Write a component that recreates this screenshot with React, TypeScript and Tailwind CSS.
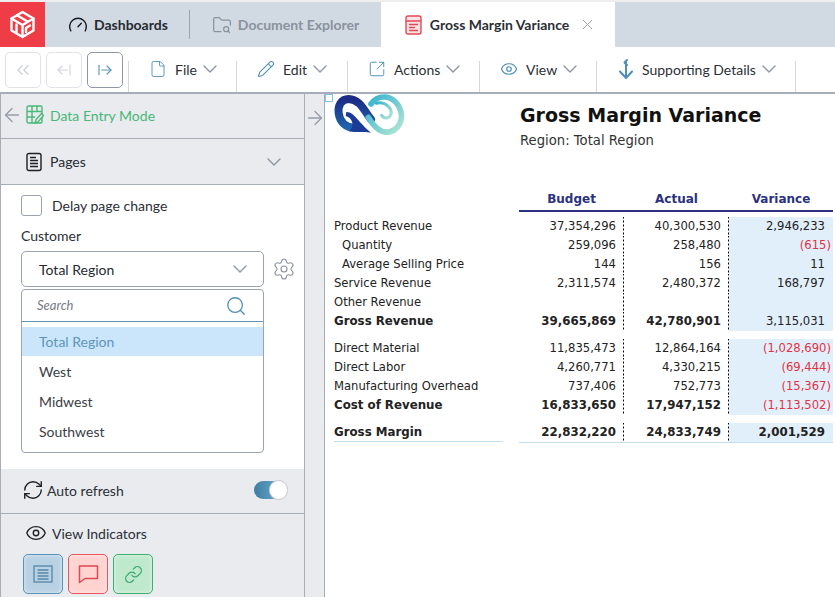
import React from "react";
import { ArrowLeft, ArrowLeftFromLine, ArrowRight, ArrowRightFromLine, ChevronDown, ChevronsLeft, Eye, File, FolderSearch, Gauge, Link, Pencil, RefreshCw, Search, Settings, SquareArrowOutUpRight, X } from "lucide-react";

const BLUE = "#4f8fb5";

function ToolItem({ icon, label, w }: { icon: React.ReactNode; label: string; w: string }) {
  return (
    <div className={`flex h-[31px] items-center border-r border-[#d3d7dd] pb-[15px] pl-[20px] ${w}`}>
      <span className="flex w-[18px] shrink-0 justify-center">{icon}</span>
      <span className="ml-[8px] text-[14px] text-[#2b2f36]">{label}</span>
      <ChevronDown size={24} strokeWidth={1.4} className="ml-[1px] shrink-0 text-[#8d96a3]" />
    </div>
  );
}

function NavBtn({ children, active }: { children: React.ReactNode; active?: boolean }) {
  return (
    <div className={`flex h-[36px] w-[36px] items-center justify-center rounded-[5px] border ${active ? "border-[#8f98a4] text-[#5e95b8]" : "border-[#dfe2e6] text-[#cfd3d9]"}`}>
      {children}
    </div>
  );
}

type Row = { l: string; b: string; a: string; v: string; bold?: boolean; indent?: boolean; neg?: boolean; vbold?: boolean };

const g1: Row[] = [
  { l: "Product Revenue", b: "37,354,296", a: "40,300,530", v: "2,946,233" },
  { l: "Quantity", b: "259,096", a: "258,480", v: "(615)", indent: true, neg: true },
  { l: "Average Selling Price", b: "144", a: "156", v: "11", indent: true },
  { l: "Service Revenue", b: "2,311,574", a: "2,480,372", v: "168,797" },
  { l: "Other Revenue", b: "", a: "", v: "" },
  { l: "Gross Revenue", b: "39,665,869", a: "42,780,901", v: "3,115,031", bold: true },
];
const g2: Row[] = [
  { l: "Direct Material", b: "11,835,473", a: "12,864,164", v: "(1,028,690)", neg: true },
  { l: "Direct Labor", b: "4,260,771", a: "4,330,215", v: "(69,444)", neg: true },
  { l: "Manufacturing Overhead", b: "737,406", a: "752,773", v: "(15,367)", neg: true },
  { l: "Cost of Revenue", b: "16,833,650", a: "17,947,152", v: "(1,113,502)", bold: true, neg: true },
];
const g3: Row[] = [{ l: "Gross Margin", b: "22,832,220", a: "24,833,749", v: "2,001,529", bold: true, vbold: true }];

const dots = "bg-[linear-gradient(#000_2px,transparent_2px)] bg-[length:1px_4px] bg-right bg-repeat-y";

function TableRow({ r, last }: { r: Row; last?: boolean }) {
  const w = r.bold ? "font-bold text-[11.8px]" : "font-normal text-[11.6px]";
  return (
    <div className="grid h-[19px] grid-cols-[185px_105px_105px_104px] items-stretch leading-[19px] text-[#222]">
      <div className={`${w} ${r.indent ? "pl-[8px]" : ""}`}>
        <div className={`mr-[16px] h-[19px] whitespace-nowrap ${last ? "border-b border-[#c5dff0]" : ""}`}>{r.l}</div>
      </div>
      <div className={`${dots} pr-[8px] text-right ${w}`}>{r.b}</div>
      <div className={`${dots} pr-[8px] text-right ${w}`}>{r.a}</div>
      <div className={`bg-[#e1effb] text-right ${r.vbold ? "font-bold text-[11.8px]" : "text-[11.6px]"} ${r.neg ? "pr-[2px] text-[#e5303f]" : "pr-[8px]"}`}>{r.v}</div>
    </div>
  );
}

export default function App() {
  return (
    <div className="flex h-[597px] w-[835px] flex-col overflow-hidden bg-white font-['Lato','Noto_Sans',sans-serif]">
      <div className="h-[2px] bg-[#eeeeee]" />
      {/* tabs */}
      <div className="flex h-[45px] bg-[#d1d9e3]">
        <div className="flex w-[45px] items-center justify-center bg-[#ef3d47]">
          <svg width="27" height="29" viewBox="0 0 27 29" fill="none" stroke="white" strokeWidth="2.4" strokeLinejoin="round" strokeLinecap="round">
            <path d="M13.500 2 24.500 8.500V20.500L13.500 27 2.500 20.500V8.500Z" />
            <path d="M2.500 8.500 13.500 15V27" />
            <path d="M13.500 15 24.500 8.500" />
            <path d="M8 5.200 18.500 11.500" />
            <path d="M7.500 14.500V22" />
            <path d="M21 15.500 17 18v4" />
          </svg>
        </div>
        <div className="flex items-center pl-[23px]">
          <Gauge size={20} strokeWidth={1.7} className="text-[#15181d]" />
          <span className="ml-[6px] text-[14px] font-bold text-[#262a31]">Dashboards</span>
        </div>
        <div className="my-[8px] ml-[21px] w-px bg-[#9aa3ae]" />
        <div className="flex w-[191px] items-center pl-[22px] text-[#8a929d]">
          <FolderSearch size={20} strokeWidth={1.5} />
          <span className="ml-[6px] text-[14px] font-bold">Document Explorer</span>
        </div>
        <div className="flex w-[234px] items-center bg-white pl-[24px]">
          <svg width="17" height="20" viewBox="0 0 17 20" fill="none" stroke="#e04a55" strokeWidth="1.4">
            <rect x="1" y="1" width="15" height="18" rx="2" fill="#fbe3e5" />
            <path d="M1 6h15M4 9.500h9M4 12.500h6M4 15.500h9" />
          </svg>
          <span className="ml-[8px] text-[14px] font-bold text-[#2b2f36]">Gross Margin Variance</span>
          <X size={17} strokeWidth={1.4} className="ml-[10px] text-[#9aa1ab]" />
        </div>
        <div className="flex-1" />
      </div>
      {/* toolbar */}
      <div className="flex h-[45px] items-center">
        <div className="flex h-[36px] items-center gap-[5px] pl-[5px] pr-[5px]">
          <NavBtn><ChevronsLeft size={20} strokeWidth={1.7} /></NavBtn>
          <NavBtn><ArrowLeftFromLine size={16} strokeWidth={1.7} /></NavBtn>
          <NavBtn active><ArrowRightFromLine size={16} strokeWidth={1.7} /></NavBtn>
        </div>
        <div className="flex items-center self-end border-l border-[#d3d7dd]">
          <ToolItem w="w-[108px] pl-[18px]" label="File" icon={<File size={24} strokeWidth={1.2} color={BLUE} />} />
          <ToolItem w="w-[111px]" label="Edit" icon={<Pencil size={20} strokeWidth={1.4} color={BLUE} />} />
          <ToolItem w="w-[132px]" label="Actions" icon={<SquareArrowOutUpRight size={24} strokeWidth={1.3} color={BLUE} />} />
          <ToolItem w="w-[117px]" label="View" icon={<Eye size={22} strokeWidth={1.6} color={BLUE} />} />
          <div className="flex h-[31px] w-[199px] items-center border-r border-[#d3d7dd] pb-[15px] pl-[20px]">
            <svg width="18" height="22" viewBox="0 0 18 22" fill="none" stroke={BLUE} strokeWidth="2" strokeLinecap="round" strokeLinejoin="round">
              <path d="M10 2 7.500 4.500 10 7" />
              <path d="M9 4.500V19" />
              <path d="M3 13.500 9 20l6-6.500" />
            </svg>
            <span className="ml-[7px] text-[14px] text-[#2b2f36]">Supporting Details</span>
            <ChevronDown size={24} strokeWidth={1.4} className="ml-[1px] shrink-0 text-[#8d96a3]" />
          </div>
        </div>
      </div>
      <div className="h-[2px] bg-[#a7aeb9]" />
      <div className="flex min-h-0 flex-1">
        {/* sidebar */}
        <div className="flex w-[305px] flex-col border-x border-[#a7aeb9] bg-[#e9ebef]">
          <div className="flex h-[45px] items-center border-b border-[#a7aeb9] pb-[2px] pl-[0px]">
            <ArrowLeft size={22} strokeWidth={1.5} className="shrink-0 text-[#969ea9]" />
            <svg width="18" height="20" viewBox="0 0 18 20" fill="none" stroke="#49b878" strokeWidth="1.4" className="ml-[3px]">
              <rect x="1" y="1" width="15" height="17" rx="1.500" />
              <path d="M1 6.500h15M1 12h8M6 1v17M11 1v6" />
              <path d="M9 18l1-3.500L15.500 8.500l2 2L12 17z" fill="#e9ebef" />
            </svg>
            <span className="ml-[6px] text-[14px] text-[#47b877]">Data Entry Mode</span>
          </div>
          <div className="flex h-[46px] items-center border-b border-[#a7aeb9] pl-[25px]">
            <svg width="16" height="20" viewBox="0 0 16 20" fill="none" stroke="#1c1f24" strokeWidth="1.4">
              <rect x="1" y="1.500" width="14" height="17" rx="2" />
              <path d="M4 5.500h6M4 8.500h8M4 11.500h8M4 14.500h8" />
            </svg>
            <span className="ml-[8px] text-[14px] text-[#262a31]">Pages</span>
            <ChevronDown size={24} strokeWidth={1.4} className="ml-[176px] shrink-0 text-[#8d96a3]" />
          </div>
          <div className="flex h-[284px] flex-col bg-white pl-[20px]">
            <div className="mt-[10px] flex h-[21px] items-center">
              <div className="h-[21px] w-[21px] rounded-[3px] border border-[#9aa3ae]" />
              <span className="ml-[10px] text-[14px] text-[#2b2f36]">Delay page change</span>
            </div>
            <div className="mt-[10px] h-[20px] text-[14px] leading-[20px] text-[#2b2f36]">Customer</div>
            <div className="mt-[5px] flex items-center">
              <div className="flex h-[36px] w-[243px] items-center justify-between rounded-[5px] border border-[#9aa3ae] pl-[17px] pr-[11px]">
                <span className="text-[14px] text-[#262a31]">Total Region</span>
                <ChevronDown size={24} strokeWidth={1.4} className="shrink-0 text-[#8d96a3]" />
              </div>
              <Settings size={24} strokeWidth={1.1} className="ml-[8px] text-[#8a929d]" />
            </div>
            <div className="mt-[2px] h-[164px] w-[243px] rounded-[4px] border border-[#9aa3ae]">
              <div className="flex h-[32px] items-center justify-between border-b border-[#5e95b8] pl-[15px] pr-[16px]">
                <span className="text-[13px] italic text-[#757c86]">Search</span>
                <Search size={22} strokeWidth={1.4} color={BLUE} />
              </div>
              <div className="mt-[5px] flex h-[29px] items-center bg-[#cbe5fb] pl-[17px] text-[14px] text-[#5e95b8]">Total Region</div>
              {["West", "Midwest", "Southwest"].map((t) => (
                <div key={t} className="flex h-[30px] items-center pl-[17px] text-[14px] text-[#3a3e45]">{t}</div>
              ))}
            </div>
          </div>
          <div className="flex h-[45px] items-center border-b border-[#a7aeb9] pb-[2px] pl-[21px]">
            <RefreshCw size={22} strokeWidth={1.5} className="shrink-0 text-[#1c1f24]" />
            <span className="ml-[3px] text-[14px] text-[#2b2f36]">Auto refresh</span>
            <div className="relative ml-[130px] h-[18px] w-[33px] rounded-full bg-linear-to-r from-[#3f7ea3] to-[#74b4d8]">
              <div className="absolute right-[-1px] top-[-1px] h-[20px] w-[19px] rounded-full border border-[#c4c9d0] bg-white" />
            </div>
          </div>
          <div className="flex flex-1 flex-col pl-[22px]">
            <div className="mt-[9px] flex h-[20px] items-center pl-[2px]">
              <Eye size={22} strokeWidth={1.5} className="shrink-0 text-[#1c1f24]" />
              <span className="ml-[5px] text-[14px] text-[#2b2f36]">View Indicators</span>
            </div>
            <div className="mt-[11px] flex gap-[5px]">
              <div className="flex h-[40px] w-[40px] items-center justify-center rounded-[5px] border border-[#5b93b8] bg-[#b8d2e4] shadow-[inset_0_0_4px_rgba(255,255,255,0.6)]">
                <svg width="20" height="18" viewBox="0 0 20 18" fill="none" stroke="#5585a6" strokeWidth="1.300">
                  <rect x="1" y="1" width="18" height="16" />
                  <path d="M4.500 5h11M4.500 8h11M4.500 11h11M4.500 14h11" />
                </svg>
              </div>
              <div className="flex h-[40px] w-[40px] items-center justify-center rounded-[5px] border border-[#e8555e] bg-[#ffd3d0] shadow-[inset_0_0_4px_rgba(255,255,255,0.6)]">
                <svg width="21" height="20" viewBox="0 0 21 20" fill="none" stroke="#dc4a55" strokeWidth="1.5" strokeLinejoin="round">
                  <path d="M1.500 2h18v12.500H7L1.500 18.500z" />
                </svg>
              </div>
              <div className="flex h-[40px] w-[40px] items-center justify-center rounded-[5px] border border-[#3fae6e] bg-[#bfe9cd] shadow-[inset_0_0_4px_rgba(255,255,255,0.6)]">
                <Link size={19} strokeWidth={1.6} color="#3fa86d" />
              </div>
            </div>
          </div>
        </div>
        {/* gutter */}
        <div className="flex w-[20px] justify-center border-r border-[#a7aeb9] bg-[#e9ebef] pt-[13px]">
          <ArrowRight size={22} strokeWidth={1.5} className="shrink-0 text-[#969ea9]" />
        </div>
        {/* report */}
        <div className="relative flex-1 pl-[9px] font-['DejaVu_Sans',sans-serif]">
          <div className="absolute left-0 top-0 h-[8px] w-[8px] border border-[#7fc0e8] bg-white" />
          <div className="relative flex h-[94px]">
            <svg width="80" height="46" viewBox="0 0 240 138" className="absolute left-[-7px] top-[-2px]" fill="none">
              <defs>
                <linearGradient id="a" x1="0" y1="0" x2="0" y2="1">
                  <stop offset="0" stopColor="#1c2b86" />
                  <stop offset="1" stopColor="#1f63ad" />
                </linearGradient>
                <linearGradient id="b" x1="0" y1="0" x2="1" y2="1">
                  <stop offset="0" stopColor="#35b2cf" />
                  <stop offset="1" stopColor="#b4e6d4" />
                </linearGradient>
              </defs>
              <path d="M132 82C112 58 100 22 65 21C42 21 32 42 35 64C38 88 54 106 82 108" stroke="url(#a)" strokeWidth="24" strokeLinecap="round" />
              <path d="M58 60C80 58 95 92 132 122C108 118 88 122 66 118C84 104 78 78 56 72Z" fill="#1c3b98" />
              <path d="M124 76C142 106 164 124 186 120C214 114 228 86 222 60C214 30 192 14 170 15C156 15 142 22 132 36" stroke="url(#b)" strokeWidth="17" strokeLinecap="round" />
              <path d="M148 34C172 26 196 48 192 66C188 80 172 82 164 70" stroke="url(#b)" strokeWidth="9" strokeLinecap="round" />
            </svg>
            <div className="ml-[186px] pt-[8px]">
              <div className="h-[26px] text-[19px] font-bold leading-[26px] text-[#111]">Gross Margin Variance</div>
              <div className="h-[26px] text-[13.2px] leading-[26px] text-[#333]">Region: Total Region</div>
            </div>
          </div>
          <div className="grid h-[20px] grid-cols-[185px_105px_105px_104px] text-[12px] font-bold leading-[22px] text-[#2a3180]">
            <div />
            <div className="border-b-2 border-[#2a3180] text-center">Budget</div>
            <div className="border-b-2 border-[#2a3180] text-center">Actual</div>
            <div className="border-b-2 border-[#2a3180] text-center">Variance</div>
          </div>
          <div className="mt-[9px]">{g1.map((r) => <TableRow key={r.l} r={r} />)}</div>
          <div className="mt-[8px]">{g2.map((r) => <TableRow key={r.l} r={r} />)}</div>
          <div className="mt-[8px]">{g3.map((r) => <TableRow key={r.l} r={r} last />)}</div>
          <div className="grid h-px grid-cols-[185px_314px]">
            <div />
            <div className="bg-[#c5dff0]" />
          </div>
        </div>
      </div>
    </div>
  );
}
